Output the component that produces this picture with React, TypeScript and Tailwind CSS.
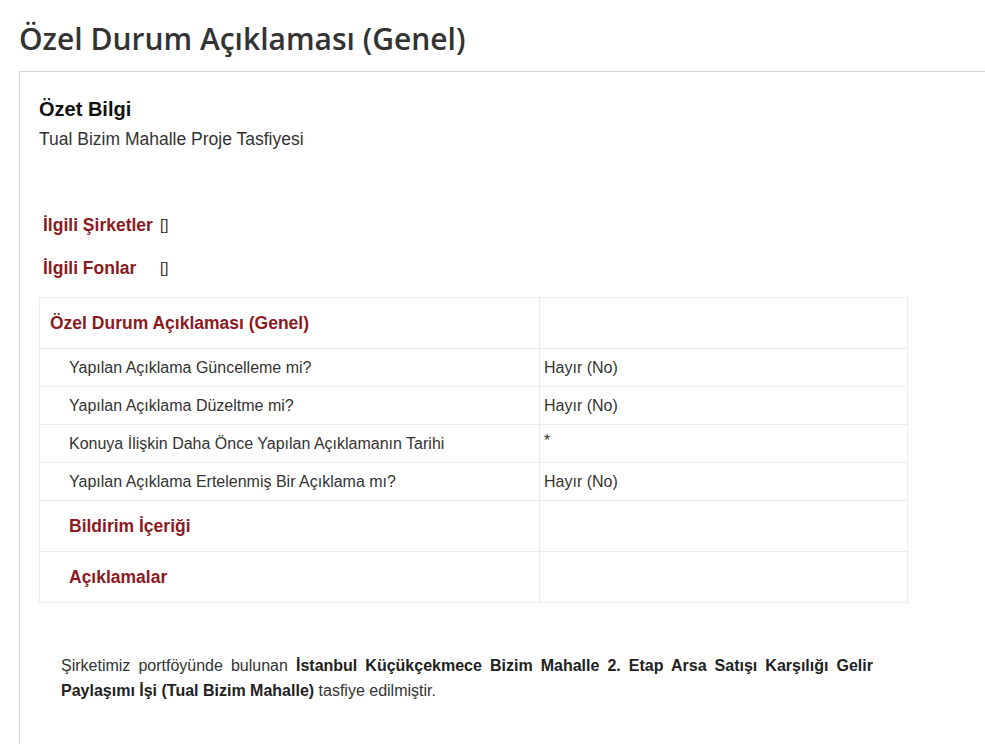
import React from 'react';

const rows = [
  { label: 'Yapılan Açıklama Güncelleme mi?', value: 'Hayır (No)' },
  { label: 'Yapılan Açıklama Düzeltme mi?', value: 'Hayır (No)' },
  { label: 'Konuya İlişkin Daha Önce Yapılan Açıklamanın Tarihi', value: '*' },
  { label: 'Yapılan Açıklama Ertelenmiş Bir Açıklama mı?', value: 'Hayır (No)' },
];

const App: React.FC = () => {
  return (
    <div className="min-h-screen bg-white overflow-hidden text-[#333]" style={{ fontFamily: '"Liberation Sans", Arial, sans-serif' }}>
      <h1
        className="pl-[19px] pt-[20px] pb-[14px] text-[30px] leading-[37px] font-semibold text-[#333]"
        style={{ fontFamily: '"Open Sans", sans-serif' }}
      >
        Özel Durum Açıklaması (Genel)
      </h1>

      <div className="ml-[19px] border-l border-t border-[#d6d6d6] pl-[19px] pt-[24px] pb-10 w-[1000px]">
        <div className="text-[20px] leading-[26px] font-bold text-[#111]">Özet Bilgi</div>
        <div className="mt-[6px] text-[17.5px] leading-[22px] text-[#333]">Tual Bizim Mahalle Proje Tasfiyesi</div>

        <div className="mt-[64px] pl-[4px] flex flex-col gap-[20px]">
          <div className="flex items-center h-[23px]">
            <span className="w-[117px] text-[17.5px] font-bold text-[#8b1a1f]">İlgili Şirketler</span>
            <span className="text-[15px] text-[#333]">[]</span>
          </div>
          <div className="flex items-center h-[23px]">
            <span className="w-[117px] text-[17.5px] font-bold text-[#8b1a1f]">İlgili Fonlar</span>
            <span className="text-[15px] text-[#333]">[]</span>
          </div>
        </div>

        <div className="mt-[17px] w-[869px] border border-[#ececec]">
          <div className="flex h-[51px] border-b border-[#ececec]">
            <div className="w-[500px] border-r border-[#ececec] pl-[10px] flex items-center text-[17.5px] font-bold text-[#8b1a1f]">
              Özel Durum Açıklaması (Genel)
            </div>
            <div className="flex-1" />
          </div>
          {rows.map((r) => (
            <div key={r.label} className="flex h-[38px] border-b border-[#ececec] text-[16px] text-[#333]">
              <div className="w-[500px] border-r border-[#ececec] pl-[29px] flex items-center">{r.label}</div>
              <div className="flex-1 pl-[4px] flex items-center">
                {r.value === '*' ? <span className="-mt-[6px]">*</span> : r.value}
              </div>
            </div>
          ))}
          <div className="flex h-[51px] border-b border-[#ececec]">
            <div className="w-[500px] border-r border-[#ececec] pl-[29px] flex items-center text-[17.5px] font-bold text-[#8b1a1f]">
              Bildirim İçeriği
            </div>
            <div className="flex-1" />
          </div>
          <div className="flex h-[50px]">
            <div className="w-[500px] border-r border-[#ececec] pl-[29px] flex items-center text-[17.5px] font-bold text-[#8b1a1f]">
              Açıklamalar
            </div>
            <div className="flex-1" />
          </div>
        </div>

        <p className="mt-[50px] ml-[22px] w-[812px] text-[16px] leading-[25px] text-justify text-[#333]">
          Şirketimiz portföyünde bulunan{' '}
          <b className="text-[#222]">İstanbul Küçükçekmece Bizim Mahalle 2. Etap Arsa Satışı Karşılığı Gelir Paylaşımı İşi (Tual Bizim Mahalle)</b>{' '}
          tasfiye edilmiştir.
        </p>
      </div>
    </div>
  );
};

export default App;
